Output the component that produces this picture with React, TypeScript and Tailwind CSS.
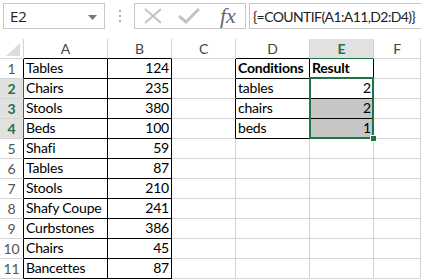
import React from "react";

const colA = ["Tables", "Chairs", "Stools", "Beds", "Shafi", "Tables", "Stools", "Shafy Coupe", "Curbstones", "Chairs", "Bancettes"];
const colB = [124, 235, 380, 100, 59, 87, 210, 241, 386, 45, 87];
const colD = ["Conditions", "tables", "chairs", "beds"];
const colE = ["Result", "2", "2", "1"];

const letters = ["A", "B", "C", "D", "E", "F"];

const cellFont = { fontFamily: "Lato, 'Liberation Sans', sans-serif", letterSpacing: "-0.2px" };

function Toolbar() {
  return (
    <div className="relative h-[39px] bg-white">
      {/* name box */}
      <div className="absolute left-[3px] top-[3px] w-[102px] h-[26px] border border-[#c6c6c6] flex items-center pl-[6px] text-[15px] text-[#222]" style={{ fontFamily: "'Open Sans', 'Liberation Sans', sans-serif" }}>
        E2
        <svg className="absolute right-[7px] top-[11px]" width="9" height="5" viewBox="0 0 9 5">
          <path d="M0 0 H9 L4.5 5 Z" fill="#777" />
        </svg>
      </div>
      {/* grip dots */}
      <div className="absolute left-[119px] top-[10px] flex flex-col gap-[3px]">
        <div className="w-[2px] h-[2px] bg-[#aaa]" />
        <div className="w-[2px] h-[2px] bg-[#aaa]" />
        <div className="w-[2px] h-[2px] bg-[#aaa]" />
      </div>
      {/* cancel / enter / fx */}
      <div className="absolute left-[134px] top-[3px] w-[112px] h-[26px] border border-[#c6c6c6] flex items-center">
        <svg className="ml-[9px]" width="18" height="16" viewBox="0 0 18 16">
          <path d="M1 1 L17 15 M17 1 L1 15" stroke="#c3c3c3" strokeWidth="2" fill="none" />
        </svg>
        <svg className="ml-[16px]" width="22" height="16" viewBox="0 0 22 16">
          <path d="M1 8 L8 14 L21 1" stroke="#c3c3c3" strokeWidth="3" fill="none" />
        </svg>
        <span className="ml-[20px] text-[22px] italic text-[#666] leading-none" style={{ fontFamily: "'Liberation Serif', serif" }}>
          fx
        </span>
      </div>
      {/* formula bar */}
      <div className="absolute left-[249px] top-[3px] w-[190px] h-[26px] border border-[#c6c6c6] flex items-center pl-[3px] text-[14px] text-[#222] whitespace-nowrap" style={{ fontFamily: "Lato, 'Liberation Sans', sans-serif", letterSpacing: "-0.6px" }}>
        {"{=COUNTIF(A1:A11,D2:D4)}"}
      </div>
    </div>
  );
}

function Cell({ children, right, bottom, className = "" }: { children?: React.ReactNode; right: string; bottom: string; className?: string }) {
  return (
    <div className={`h-[20px] border-r border-b ${right} ${bottom} flex items-end pb-[1px] px-[2px] text-[14px] leading-[18px] text-black whitespace-nowrap overflow-hidden ${className}`} style={cellFont}>
      {children}
    </div>
  );
}

export default function App() {
  const rows = Array.from({ length: 11 }, (_, i) => i + 1);
  return (
    <div className="w-[421px] h-[279px] bg-white overflow-hidden relative">
      <Toolbar />
      <div className="grid grid-cols-[24px_84px_64px_64px_74px_64px_1fr]">
        {/* header row */}
        <div className="h-[20px] border-r border-b border-[#d4d4d4] relative">
          <svg className="absolute left-[6px] top-[4px]" width="14" height="13" viewBox="0 0 14 13">
            <path d="M14 0 V13 H0 Z" fill="#dcdcdc" />
          </svg>
        </div>
        {letters.map((l) => {
          const sel = l === "E";
          const bottom = sel ? "border-b-[#217346]" : l === "A" || l === "B" || l === "D" ? "border-b-black" : "border-b-[#d4d4d4]";
          return (
            <div
              key={l}
              className={`h-[20px] border-r border-b border-r-[#d4d4d4] ${bottom} flex items-center justify-center text-[14px] ${sel ? "bg-[#e1e1e1] font-bold text-[#217346]" : "text-[#444]"}`}
              style={cellFont}
            >
              {l}
            </div>
          );
        })}
        {rows.map((r) => {
          const selRow = r >= 2 && r <= 4;
          const inTop = r <= 4;
          return (
            <React.Fragment key={r}>
              <div
                className={`h-[20px] border-r border-b border-b-[#d4d4d4] ${selRow ? "border-r-[#217346] bg-[#e1e1e1] font-bold text-[#217346]" : "border-r-black text-[#555]"} flex items-center justify-center text-[14px]`}
                style={cellFont}
              >
                {r}
              </div>
              <Cell right="border-r-black" bottom="border-b-black">{colA[r - 1]}</Cell>
              <Cell right="border-r-black" bottom="border-b-black" className="justify-end">{colB[r - 1]}</Cell>
              <Cell right={inTop ? "border-r-black" : "border-r-[#d4d4d4]"} bottom="border-b-[#d4d4d4]" />
              <Cell right={inTop ? "border-r-black" : "border-r-[#d4d4d4]"} bottom={inTop ? "border-b-black" : "border-b-[#d4d4d4]"} className={r === 1 ? "font-bold" : ""}>
                {inTop ? colD[r - 1] : null}
              </Cell>
              <Cell
                right={inTop ? "border-r-black" : "border-r-[#d4d4d4]"}
                bottom={inTop ? "border-b-black" : "border-b-[#d4d4d4]"}
                className={`${r === 1 ? "font-bold" : "justify-end"} ${r === 3 || r === 4 ? "bg-[#c6c6c6]" : ""}`}
              >
                {inTop ? colE[r - 1] : null}
              </Cell>
              <Cell right="border-r-[#d4d4d4]" bottom="border-b-[#d4d4d4]" />
            </React.Fragment>
          );
        })}
      </div>
      {/* selection E2:E4 */}
      <div className="absolute left-[309px] top-[77px] w-[65px] h-[62px] border-2 border-[#217346] pointer-events-none" />
      <div className="absolute left-[370px] top-[135px] w-[7px] h-[7px] bg-[#217346] border border-white" />
    </div>
  );
}
